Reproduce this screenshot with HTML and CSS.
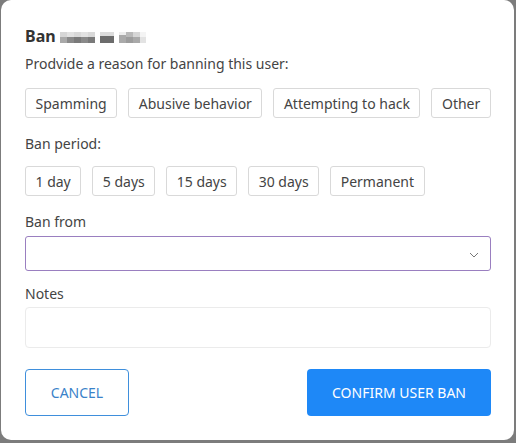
FILE: index.html
```html
<!DOCTYPE html>
<html lang="en">
<head>
<meta charset="utf-8">
<title>Ban user</title>
<link rel="stylesheet" href="styles.css">
</head>
<body>
<div class="modal">
  <h2 class="title">Ban <span class="blur" aria-hidden="true">
    <span class="px c1"></span><span class="px c2"></span><span class="px c3"></span><span class="px c2"></span><span class="px c3"></span><span class="px gap"></span><span class="px c4"></span><span class="px c4"></span><span class="px gap"></span><span class="px c5"></span><span class="px c6"></span><span class="px c1"></span><span class="px c7"></span>
  </span></h2>
  <p class="text prompt">Prodvide a reason for banning this user:</p>
  <div class="chips chips-reason">
    <button class="chip">Spamming</button>
    <button class="chip">Abusive behavior</button>
    <button class="chip">Attempting to hack</button>
    <button class="chip">Other</button>
  </div>
  <p class="text label-period">Ban period:</p>
  <div class="chips chips-period">
    <button class="chip">1 day</button>
    <button class="chip">5 days</button>
    <button class="chip">15 days</button>
    <button class="chip">30 days</button>
    <button class="chip">Permanent</button>
  </div>
  <p class="text label-from">Ban from</p>
  <div class="select">
    <svg class="chev" width="10" height="6" viewBox="0 0 10 6"><path d="M1 1 L5 5 L9 1" fill="none" stroke="#777" stroke-width="1"/></svg>
  </div>
  <p class="text label-notes">Notes</p>
  <div class="notes"></div>
  <div class="footer">
    <button class="btn btn-cancel">CANCEL</button>
    <button class="btn btn-confirm">CONFIRM USER BAN</button>
  </div>
</div>
</body>
</html>
```
FILE: styles.css
```css
* { box-sizing: border-box; }
html, body { margin: 0; padding: 0; }
body {
  width: 516px;
  height: 443px;
  background: #7c7c7c;
  font-family: "Noto Sans", "Open Sans", sans-serif;
  overflow: hidden;
}
.modal {
  margin: 0 0 0 1px;
  width: 513px;
  height: 440px;
  background: #fff;
  border-radius: 10px;
  padding: 25px 23px 0 24px;
  display: flex;
  flex-direction: column;
}
.title {
  margin: 0;
  font-size: 16px;
  line-height: 22px;
  font-weight: 700;
  color: #333;
  display: flex;
  align-items: center;
}
.blur {
  display: inline-flex;
  margin-left: 4px;
  height: 11px;
  margin-top: 2px;
}
.px { width: 7px; height: 11px; display: inline-block; }
.c1 { background: linear-gradient(#d6d6d6 50%, #a9a9a9 50%); }
.c2 { background: linear-gradient(#e2e2e2 50%, #8a8a8a 50%); }
.c3 { background: linear-gradient(#d9d9d9 50%, #7a7a7a 50%); }
.c4 { background: linear-gradient(#dcdcdc 40%, #6c6c6c 40%); }
.c5 { background: linear-gradient(#eeeeee 30%, #aaaaaa 30%); }
.c6 { background: linear-gradient(#b9b9b9 50%, #9c9c9c 50%); }
.c7 { background: linear-gradient(#f4f4f4 50%, #e3e3e3 50%); width: 6px; }
.gap { background: transparent; width: 5px; }
.text {
  margin: 0;
  font-size: 14px;
  line-height: 20px;
  color: #444;
}
.prompt { margin-top: 7px; }
.chips {
  display: flex;
  flex-wrap: nowrap;
}
.chips-reason { margin-top: 14px; gap: 11px; }
.chips-period { margin-top: 12px; gap: 11px; }
.chip {
  flex: none;
  height: 30px;
  padding: 0 9.5px;
  border: 1px solid #d9d9d9;
  border-radius: 3px;
  background: #fff;
  font-family: inherit;
  font-size: 14px;
  color: #444;
  white-space: nowrap;
}
.label-period { margin-top: 16px; }
.label-from { margin-top: 16px; }
.select {
  margin-top: 4px;
  width: 466px;
  height: 35px;
  border: 1px solid #9a7fc0;
  border-radius: 3px;
  display: flex;
  align-items: center;
  justify-content: flex-end;
  padding-right: 11px;
}
.chev { margin-top: 2px; }
.label-notes { margin-top: 13px; }
.notes {
  margin-top: 3px;
  width: 466px;
  height: 41px;
  border: 1px solid #ebebeb;
  border-radius: 4px;
}
.footer {
  margin-top: 21px;
  width: 466px;
  display: flex;
  justify-content: space-between;
}
.btn {
  height: 47px;
  border-radius: 4px;
  font-family: inherit;
  font-size: 14px;
}
.btn-cancel {
  width: 104px;
  background: #fff;
  border: 1px solid #3f8fdc;
  color: #3a82c9;
}
.btn-confirm {
  width: 184px;
  background: #1e88f7;
  border: 0;
  color: #fff;
}
```
